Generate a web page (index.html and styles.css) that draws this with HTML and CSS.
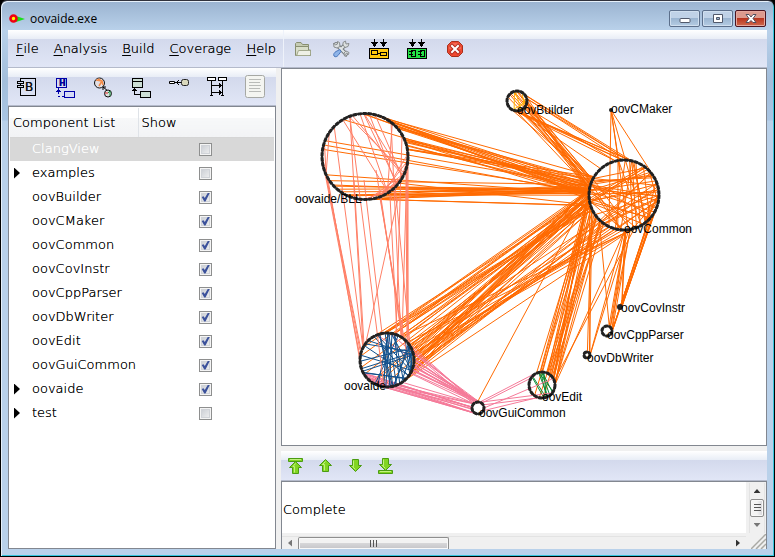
FILE: index.html
```html
<!DOCTYPE html>
<html lang="en">
<head>
<meta charset="utf-8">
<title>oovaide.exe</title>
<link rel="stylesheet" href="styles.css">
</head>
<body>
<div class="window">
  <header class="titlebar">
    <svg class="app-icon" width="16" height="10" viewBox="0 0 16 10" aria-hidden="true"><path d="M7 2l9 3-9 3z" fill="#1be01b"/><circle cx="4.500" cy="4.500" r="3" fill="#ff0" stroke="#f00013" stroke-width="2.600"/></svg>
    <h1 class="title">oovaide.exe</h1>
    <div class="caption-buttons">
      <button class="caption" aria-label="Minimize"><svg width="12" height="12" viewBox="0 0 12 12"><rect x="1" y="5.500" width="10" height="4" rx="1" fill="#fff" stroke="#51596b"/></svg></button>
      <button class="caption" aria-label="Maximize"><svg width="12" height="12" viewBox="0 0 12 12"><path d="M1.500 1.500h9v8h-9z" fill="#fff" stroke="#51596b"/><path d="M4.500 4.500h3v2h-3z" fill="#9ab4d0" stroke="#51596b"/></svg></button>
      <button class="caption close" aria-label="Close"><svg width="12" height="12" viewBox="0 0 12 12"><path d="M1 1.500h3l2 2.500 2-2.500h3l-3 4 3 4H8L6 7.500l-2 2H1l3-4z" fill="#fff" stroke="#51505f"/></svg></button>
    </div>
  </header>

  <div class="topbar">
    <nav class="menu">
      <button><u>F</u>ile</button><button><u>A</u>nalysis</button><button><u>B</u>uild</button><button><u>C</u>overage</button><button><u>H</u>elp</button>
    </nav>
    <div class="tools">
      <button aria-label="Open project"><svg width="18" height="16" viewBox="0 0 18 16"><path d="M1.500 13V2.500l1-1H7l1.500 2h6V7" fill="#c5cbb2" stroke="#888e70"/><path d="M1.500 14.500V5.500h13V9h2v5.500z" fill="#d9dec9" stroke="#888e70"/><path d="M4 14V9.500h12V14z" fill="#eef0e5"/><path d="M4.500 9.500h12v4l-1 1h-13z" fill="none" stroke="#a3a98d"/></svg></button>
      <button aria-label="Settings"><svg width="18" height="18" viewBox="0 0 18 18"><path d="M4 4l10 10" stroke="#74797c" stroke-width="4" stroke-linecap="round"/><path d="M13 5L8 10" stroke="#777d80" stroke-width="4"/><path d="M4 4l10 10M13 5L8 10" stroke="#e2e6e6" stroke-width="2" stroke-linecap="round"/><path d="M1.500 3l2 2 2-1V1.500l2 1 .5 4-3 1.500-3-1zM11 5V2.500L13.500 1l.5 3 3-.5-1 3-3 1zM12 13l2-2 3 1.500-.5 2-2-1.500-1 1.500 1 2-2-.5z" fill="#dce0e0" stroke="#8a8e90"/><path d="M2 16c-1-2 .5-3.500 2-4.500l4-2 1 2-3 4c-1 1-2.500 2-4 .5z" fill="#8eb4e8" stroke="#4c78bd"/></svg></button>
      <button aria-label="Build analysis"><svg width="20" height="20" viewBox="0 0 20 20" shape-rendering="crispEdges"><path d="M.5 9.500h19v10H.5z" fill="#ffc90e" stroke="#000"/><path d="M2.500 11.500h6v4h-6zM11.500 13.500h6v3h-6zM8 14.500h4" fill="none" stroke="#000"/><path d="M5.500 0v6M14.500 0v6" stroke="#000"/><path d="M2 3h7L5.500 8zM11 3h7l-3.500 5z"/></svg></button>
      <button aria-label="Build components"><svg width="20" height="20" viewBox="0 0 20 20" shape-rendering="crispEdges"><path d="M.5 9.500h19v10H.5z" fill="#22e345" stroke="#000"/><path d="M4.500 11.500h4v6h-4zM13.500 11.500h4v6h-4zM2 12.500h4M2 15.500h4M11 12.500h4M11 15.500h4" fill="none" stroke="#000"/><path d="M5.500 0v6M14.500 0v6" stroke="#000"/><path d="M2 3h7L5.500 8zM11 3h7l-3.500 5z"/></svg></button>
      <button aria-label="Stop"><svg width="18" height="18" viewBox="0 0 18 18"><path d="M5.500 1.500h7l4 4v7l-4 4h-7l-4-4v-7z" fill="#ef4932" stroke="#a7301c"/><path d="M6 3h6l3 3v3H3V6z" fill="#fa7b64" opacity=".6"/><path d="M6 6l6 6M12 6l-6 6" stroke="#b32a1d" stroke-width="4" stroke-linecap="square"/><path d="M6 6l6 6M12 6l-6 6" stroke="#fff" stroke-width="2" stroke-linecap="square"/></svg></button>
    </div>
  </div>

  <main class="workspace">
    <section class="side">
      <div class="view-tools">
        <button aria-label="Component diagram"><svg width="20" height="22" viewBox="0 0 20 22" shape-rendering="crispEdges"><path d="M3.500 2.500h15v17h-15z" fill="none" stroke="#000"/><path d="M.5 5.500h6v2h-6zM.5 9.500h6v2h-6z" fill="#d4daed" stroke="#000"/><text x="8" y="15" class="glyph">B</text></svg></button>
        <button aria-label="Zone diagram"><svg width="20" height="22" viewBox="0 0 20 22" shape-rendering="crispEdges"><g fill="none" stroke="#0000a8"><path d="M1.500 2.500h10v9h-10z"/><path d="M9.500 15.500h10v6h-10z" fill="#d5dbf5"/><path d="M3.500 12v6M1 15.500h5M2 14.500h3M3.500 20v1M4 20.500h1M7 20.500h2"/></g><text x="4" y="10" class="glyph small">H</text></svg></button>
        <button aria-label="Portion diagram"><svg width="20" height="22" viewBox="0 0 20 22"><circle cx="6.500" cy="7" r="5" fill="#e3dfe3" stroke="#111"/><path d="M3 4l6 1-3 5M5 3l4 2 1 4" fill="none" stroke="#f38b48" stroke-width="1.500"/><path d="M10 11l5 4M10 11v3M10 11h3" stroke="#000" fill="none"/><circle cx="15" cy="17.500" r="3.500" fill="#dadfdd" stroke="#111"/><path d="M12 17h3" stroke="#d22"/><path d="M15 17l2-2v5" stroke="#198d40" fill="none"/></svg></button>
        <button aria-label="Class diagram"><svg width="20" height="22" viewBox="0 0 20 22" shape-rendering="crispEdges"><g fill="#cbded5" stroke="#000"><path d="M1.500 2.500h10v9h-10zM1.500 5.500h10M9.500 15.500h10v6h-10z"/><path d="M3.500 12v6.500h6M1 14.500h5M2 13.500h3" fill="none"/></g></svg></button>
        <button aria-label="Operation diagram"><svg width="20" height="22" viewBox="0 0 20 22"><path d="M.5 5.500h5v2h-5z" fill="#fff" stroke="#000"/><path d="M6 6.500h7M10 4L7.500 6.500 10 9" fill="none" stroke="#000"/><rect x="12.500" y="3.500" width="7" height="6" rx="2" fill="#dad9bd" stroke="#222"/></svg></button>
        <button aria-label="Sequence diagram"><svg width="20" height="22" viewBox="0 0 20 22" shape-rendering="crispEdges"><path d="M.5 1.500h8v3h-8zM11.500 1.500h8v3h-8z" fill="#fff" stroke="#000"/><path d="M4.500 5v15M15.500 5v15M3 19.500h3M14 19.500h3M5 9.500h10M5 16.500h10M12.500 7v5M13.500 8v3M12.500 14v5M13.500 15v3" fill="none" stroke="#000"/></svg></button>
        <button aria-label="View source"><svg width="20" height="24" viewBox="0 0 20 24"><rect x=".5" y=".5" width="19" height="22" rx="2" fill="#f4f5f1" stroke="#a6a8a4"/><path d="M4 4.500h12M4 7.500h11M4 10.500h12M4 13.500h11M4 16.500h12" stroke="#b9bbb8"/></svg></button>
      </div>
      <div class="list-panel">
        <table class="components">
          <colgroup><col class="arrow-col"><col class="name-col"><col></colgroup>
          <thead><tr><th colspan="2" scope="col">Component List</th><th scope="col">Show</th></tr></thead>
          <tbody>
            <tr class="selected"><td></td><td><label for="c1">ClangView</label></td><td><input type="checkbox" id="c1"></td></tr>
            <tr><td><i class="expander"></i></td><td><label for="c2">examples</label></td><td><input type="checkbox" id="c2"></td></tr>
            <tr><td></td><td><label for="c3">oovBuilder</label></td><td><input type="checkbox" id="c3" checked></td></tr>
            <tr><td></td><td><label for="c4">oovCMaker</label></td><td><input type="checkbox" id="c4" checked></td></tr>
            <tr><td></td><td><label for="c5">oovCommon</label></td><td><input type="checkbox" id="c5" checked></td></tr>
            <tr><td></td><td><label for="c6">oovCovInstr</label></td><td><input type="checkbox" id="c6" checked></td></tr>
            <tr><td></td><td><label for="c7">oovCppParser</label></td><td><input type="checkbox" id="c7" checked></td></tr>
            <tr><td></td><td><label for="c8">oovDbWriter</label></td><td><input type="checkbox" id="c8" checked></td></tr>
            <tr><td></td><td><label for="c9">oovEdit</label></td><td><input type="checkbox" id="c9" checked></td></tr>
            <tr><td></td><td><label for="c10">oovGuiCommon</label></td><td><input type="checkbox" id="c10" checked></td></tr>
            <tr><td><i class="expander"></i></td><td><label for="c11">oovaide</label></td><td><input type="checkbox" id="c11" checked></td></tr>
            <tr><td><i class="expander"></i></td><td><label for="c12">test</label></td><td><input type="checkbox" id="c12"></td></tr>
          </tbody>
        </table>
      </div>
    </section>

    <section class="content">
      <div class="diagram">
        <svg id="graph" viewBox="282 69 484 376" preserveAspectRatio="xMinYMin meet" role="img" aria-label="Component dependency graph">
          <g id="edges"></g>
          <g id="nodes"></g>
          <g id="labels"></g>
        </svg>
      </div>
      <div class="nav-tools">
        <button aria-label="Top"><svg width="16" height="16" viewBox="0 0 16 16"><path class="green" d="M.5.500h14v3H.5zM7.500 3.500l6 6h-3v6h-6v-6h-3z"/><path class="shine" d="M2 1.500h11M7.500 5.500L5 8.500h1.500v6"/></svg></button>
        <button aria-label="Up"><svg width="16" height="16" viewBox="0 0 16 16"><path class="green" d="M7.500 1.500l6 6h-3v6h-6v-6h-3z"/><path class="shine" d="M7.500 3.500l-3 3h2v6"/></svg></button>
        <button aria-label="Down"><svg width="16" height="16" viewBox="0 0 16 16"><path class="green" d="M4.500 1.500h6v6h3l-6 6-6-6h3z"/><path class="shine" d="M5.500 2.500v6h-1l3 3"/></svg></button>
        <button aria-label="Bottom"><svg width="16" height="16" viewBox="0 0 16 16"><path class="green" d="M4.500.500h6v6h3l-6 6-6-6h3zM.5 12.500h14v3H.5z"/><path class="shine" d="M5.500 1.500v6h-1l3 3M2 13.500h11"/></svg></button>
      </div>
      <div class="output">
        <div class="message">Complete</div>
        <div class="vscroll">
          <button aria-label="Scroll up"><i class="tri up"></i></button>
          <div class="thumb"></div>
          <button aria-label="Scroll down"><i class="tri down"></i></button>
        </div>
        <div class="hscroll">
          <button aria-label="Scroll left"><i class="tri left"></i></button>
          <div class="track"><div class="thumb"></div></div>
          <button aria-label="Scroll right"><i class="tri right"></i></button>
        </div>
        <svg class="grip" width="15" height="15" viewBox="0 0 15 15" aria-hidden="true"><path d="M0 15L15 0M5 15L15 5M10 15l5-5" stroke="#a9a9a4" stroke-width="1.500"/></svg>
      </div>
    </section>
  </main>
</div>
<script src="graph.js"></script>
</body>
</html>
```
FILE: styles.css
```css
* { box-sizing: border-box; }

body {
  margin: 0;
  height: 100vh;
  background: #000;
  font: 200 13px/18px "DejaVu Sans", "DejaVu Sans Light", Verdana, sans-serif;
  color: #000;
  text-shadow: 0 0 currentColor;
  overflow: hidden;
}

button {
  display: flex;
  align-items: center;
  justify-content: center;
  margin: 0;
  padding: 0;
  border: 0;
  background: none;
  font: inherit;
  color: inherit;
  text-shadow: inherit;
}

.window {
  display: flex;
  flex-direction: column;
  height: 100vh;
  padding: 0 7px 7px 6px;
  border: solid #000;
  border-width: 1px;
  border-top-color: #30323c;
  border-radius: 7px 7px 0 0;
  background: linear-gradient(#9ab3d0, #b9d1ea 29px, #a3bedb 80px, #a9c5e3 119px, #b9d1ea 120px);
  box-shadow: inset 1px 1px #e6f0fa, inset -1px -1px #35c5dc;
}

.titlebar {
  display: flex;
  align-items: center;
  flex: none;
  height: 29px;
  padding: 6px 1px 0 2px;
}

.app-icon { margin-right: 5px; }

.title {
  flex: 1;
  margin: 0;
  font: 12px/18px "Open Sans", "Noto Sans", sans-serif;
  color: #000;
  text-shadow: none;
}

.caption-buttons { display: flex; gap: 2px; }

.caption {
  width: 31px;
  height: 17px;
  border: 1px solid #5c6f8b;
  border-radius: 2px;
  background: linear-gradient(#c0d2e7 50%, #9bb5d1 50%, #b5cce3);
  box-shadow: inset 0 0 0 1px #d0dfef;
}

.close {
  border-color: #4a1420;
  background: linear-gradient(#dc9a8e 45%, #b9351f 50%, #cf6a4e);
  box-shadow: inset 0 0 0 1px #e5a79d;
}

.topbar, .view-tools, .nav-tools {
  display: flex;
  flex: none;
  border-bottom: 1px solid #b4bacb;
  background: linear-gradient(#fff, #e8edf6 9px, #d3d9ec 9px, #e1e6f6);
}

.topbar { height: 38px; margin-left: 1px; }

.menu {
  display: flex;
  flex: none;
  width: 276px;
  gap: 15px;
  padding-left: 8px;
  border-right: 1px solid #eef2fa;
  overflow: hidden;
}

.menu u { text-underline-offset: 2px; }

.tools { display: flex; }

.tools button, .view-tools button { width: 38px; }

.workspace {
  display: flex;
  flex: 1;
  min-height: 0;
  margin-left: 1px;
  background: #f0f0f0;
}

.side {
  display: flex;
  flex: none;
  flex-direction: column;
  width: 268px;
}

.view-tools { height: 38px; }

.glyph {
  font: 12px "DejaVu Sans", sans-serif;
  fill: #111;
}

.glyph.small { font-size: 8px; font-weight: bold; fill: #0000a8; }

.list-panel {
  flex: 1;
  padding: 1px;
  border: 1px solid #828790;
  background: #fff;
}

.components {
  width: 100%;
  border-collapse: collapse;
  table-layout: fixed;
}

.arrow-col { width: 22px; }
.name-col { width: 106px; }

.components th {
  height: 29px;
  padding: 2px 3px 0;
  border-bottom: 1px solid #d5d5d5;
  background: linear-gradient(#fff 35%, #f7f8f9 35%, #f2f3f5);
  font-weight: inherit;
  text-align: left;
}

.components th + th { border-left: 1px solid #dfe3e8; }

.components td { height: 24px; padding: 0; white-space: nowrap; }
.components td:last-child { padding-left: 61px; }

.components td:last-child, .components th { vertical-align: middle; }

.selected { background: #d8d8d8; color: #fff; }

.expander {
  display: block;
  width: 6px;
  height: 11px;
  margin-left: 4px;
  background: #000;
  clip-path: polygon(0 0, 100% 50%, 0 100%);
}

input[type="checkbox"] {
  appearance: none;
  display: block;
  width: 13px;
  height: 13px;
  margin: 0;
  border: 1px solid #8e8f8f;
  background: linear-gradient(135deg, #c5c9d0, #f4f4f4);
  box-shadow: inset 0 0 0 1px #f4f4f4, inset 0 0 0 2px #d0d3d8;
}

input[type="checkbox"]:checked::after {
  content: "";
  display: block;
  width: 9px;
  height: 9px;
  margin: 1px;
  background: #3b519b;
  clip-path: polygon(8% 50%, 28% 42%, 42% 62%, 78% 0, 100% 0, 50% 100%, 36% 100%);
}

.content {
  display: flex;
  flex: 1;
  flex-direction: column;
  min-width: 0;
  margin-left: 5px;
}

.diagram {
  flex: 1;
  min-height: 0;
  border: 1px solid #828790;
  background: #fff;
}

.diagram svg { display: block; width: 100%; height: 100%; }

#edges path { fill: none; stroke-width: 1; }
#nodes { fill: none; stroke: #222; stroke-width: 2; }
#nodes .ring { stroke-width: 3; stroke-dasharray: 4 1; }
#nodes .dot { fill: #222; stroke: none; }
#labels {
  font: 12px "Liberation Sans", Arial, sans-serif;
  fill: #000;
  text-shadow: none;
}

.nav-tools {
  height: 30px;
  margin-top: 5px;
}

.nav-tools button { width: 30px; }

.green { fill: #82d522; stroke: #4b9c12; }
.shine { fill: none; stroke: #c1f27f; }

.output {
  display: grid;
  flex: none;
  grid-template: 51px 16px / 1fr 20px;
  border: solid #828790;
  border-width: 1px 1px 0;
  background: #f0f0f0;
}

.message {
  display: flex;
  align-items: center;
  padding: 4px 1px 0;
  background: #fff;
}

.vscroll {
  display: flex;
  flex-direction: column;
  margin: 1px 1px 0 3px;
  border: solid #e3e3e3;
  border-width: 0 1px;
}

.vscroll button { flex: 1; }

.thumb {
  border: 1px solid #8e8e8e;
  border-radius: 2px;
  box-shadow: inset 0 0 0 1px #f8f8f8;
}

.vscroll .thumb {
  height: 18px;
  background:
    repeating-linear-gradient(#555 0 1px, transparent 1px 3px) center / 7px 8px no-repeat,
    linear-gradient(90deg, #f4f4f4 50%, #d4d4d8);
}

.hscroll {
  display: flex;
  margin-top: 3px;
  border-top: 1px solid #e3e3e3;
}

.hscroll button { width: 16px; }

.track { flex: 1; }

.hscroll .thumb {
  width: 35%;
  height: 12px;
  border-bottom: 0;
  border-radius: 2px 2px 0 0;
  background:
    repeating-linear-gradient(90deg, #555 0 1px, transparent 1px 3px) center / 8px 7px no-repeat,
    linear-gradient(#f2f2f2 45%, #d6d6d8 50%, #c4c4c8);
}

.tri { width: 7px; height: 4px; background: #333; }
.tri.up { clip-path: polygon(50% 0, 100% 100%, 0 100%); }
.tri.down { clip-path: polygon(0 0, 100% 0, 50% 100%); background: #777; }
.tri.left, .tri.right { width: 4px; height: 7px; }
.tri.left { clip-path: polygon(100% 0, 100% 100%, 0 50%); background: #777; }
.tri.right { clip-path: polygon(0 0, 100% 50%, 0 100%); }

.grip { align-self: end; justify-self: end; }
```
FILE: graph.js
```js
const NODES = {
  bll: { x: 365, y: 156.5, r: 43, label: "oovaide/BLL", lx: 295, ly: 203 },
  builder: { x: 517, y: 101, r: 10, label: "oovBuilder", lx: 517, ly: 114 },
  cmaker: { x: 611, y: 110, r: 1, label: "oovCMaker", lx: 611, ly: 113 },
  common: { x: 624, y: 195, r: 35, label: "oovCommon", lx: 624, ly: 233 },
  cov: { x: 620, y: 307, r: 2, label: "oovCovInstr", lx: 621, ly: 312 },
  cpp: { x: 607, y: 331, r: 5, label: "oovCppParser", lx: 607, ly: 339 },
  db: { x: 587, y: 355, r: 3, label: "oovDbWriter", lx: 587, ly: 362 },
  edit: { x: 542, y: 385, r: 13, label: "oovEdit", lx: 542, ly: 401 },
  gui: { x: 478, y: 408, r: 6, label: "oovGuiCommon", lx: 479, ly: 417 },
  ide: { x: 387, y: 360, r: 27, label: "oovaide", lx: 344, ly: 390 }
};

const ORANGE = "#ff6a00", SALMON = "#ff7f66", PINK = "#f57a99";
const BLUE = "#10508c", GREEN = "#0c8a35", GOLD = "#ffb400";

// Bundles: colour, node, angle range, node, angle range, count.
// Angles are in degrees, clockwise from the right.
const BUNDLES = [
  [ORANGE, "bll", -62, -5, "common", 172, 215, 18],
  [ORANGE, "bll", -125, -50, "common", 175, 200, 7],
  [ORANGE, "bll", 175, 215, "common", 180, 195, 3],
  [ORANGE, "bll", 25, 85, "common", 178, 200, 10],
  [ORANGE, "bll", 110, 155, "common", 178, 200, 9],
  [ORANGE, "bll", 30, 90, "common", 140, 165, 3],
  [ORANGE, "builder", 0, 360, "common", 185, 208, 18],
  [ORANGE, "builder", -60, 130, "common", -105, -75, 10],
  [ORANGE, "builder", 60, 90, "common", 220, 235, 1],
  [ORANGE, "ide", -105, 45, "common", 155, 195, 32],
  [ORANGE, "ide", 90, 235, "common", 165, 190, 9],
  [ORANGE, "ide", -60, 50, "common", 70, 140, 18],
  [ORANGE, "edit", -140, -20, "common", 165, 195, 10],
  [ORANGE, "edit", -110, 10, "common", 120, 170, 9],
  [ORANGE, "edit", -20, 40, "common", 70, 90, 2],
  [ORANGE, "edit", 70, 150, "common", 140, 160, 3],
  [ORANGE, "db", -100, 0, "common", 155, 175, 3],
  [ORANGE, "db", -20, 20, "common", 80, 95, 2],
  [ORANGE, "cpp", -20, 40, "common", 30, 50, 5],
  [ORANGE, "cpp", -70, 20, "common", 75, 95, 5],
  [ORANGE, "cpp", -90, -60, "common", 135, 140, 1],
  [ORANGE, "cov", -120, 0, "common", 15, 45, 5],
  [ORANGE, "cov", -120, 0, "common", 75, 90, 2],
  [ORANGE, "common", 165, 210, "common", -60, 100, 28],
  [ORANGE, "common", -100, -70, "common", 50, 110, 9],
  [ORANGE, "common", -60, 20, "common", 10, 150, 18],
  [SALMON, "bll", -20, 60, "bll", 10, 110, 12],
  [SALMON, "bll", -125, -40, "bll", 20, 80, 8],
  [SALMON, "bll", 150, 200, "bll", 155, 225, 5],
  [PINK, "ide", -30, 30, "gui", -140, -20, 13],
  [PINK, "ide", 70, 165, "gui", 100, 230, 13],
  [PINK, "ide", -120, 60, "gui", -160, -60, 7],
  [BLUE, "ide", -110, -60, "ide", 60, 120, 9],
  [BLUE, "ide", 150, 250, "ide", -40, 60, 11],
  [BLUE, "ide", -95, -20, "ide", 20, 100, 11],
  [GREEN, "edit", -110, -80, "edit", 10, 70, 6],
  [GREEN, "edit", -150, -130, "edit", 70, 90, 2],
  [GOLD, "builder", -120, 0, "builder", 40, 180, 5]
];

// Single links: colour and end points.
const LINKS = [
  [ORANGE, 611, 110, 609, 225], [ORANGE, 611, 110, 628, 228],
  [ORANGE, 611, 110, 634, 190], [ORANGE, 611, 110, 651, 172],
  [ORANGE, 611, 110, 620, 170], [ORANGE, 478, 401, 591, 190],
  [SALMON, 324, 168, 360, 357], [SALMON, 323, 160, 361, 350],
  [SALMON, 328, 180, 361, 367], [SALMON, 326, 175, 360, 350],
  [SALMON, 334, 125, 363, 348], [SALMON, 350, 117, 363, 346],
  [SALMON, 354, 180, 364, 345], [SALMON, 350, 118, 384, 387],
  [SALMON, 364, 180, 382, 333], [SALMON, 376, 170, 403, 340],
  [SALMON, 380, 198, 406, 350], [SALMON, 381, 198, 402, 338],
  [SALMON, 402, 136, 396, 334], [SALMON, 398, 198, 366, 342],
  [SALMON, 390, 196, 397, 336], [SALMON, 391, 122, 401, 338],
  [SALMON, 395, 185, 410, 345], [SALMON, 407, 165, 402, 338],
  [SALMON, 406, 170, 407, 342], [SALMON, 407, 150, 408, 343],
  [SALMON, 408, 150, 408, 343], [SALMON, 343, 120, 393, 200],
  [PINK, 534, 374, 480, 402], [PINK, 535, 376, 480, 404],
  [PINK, 552, 393, 482, 402], [PINK, 545, 397, 482, 405],
  [PINK, 552, 379, 484, 408], [PINK, 540, 397, 482, 411]
];

const svg = (parent, tag, attrs) => {
  const el = document.createElementNS("http://www.w3.org/2000/svg", tag);
  for (const key in attrs) el.setAttribute(key, attrs[key]);
  return document.getElementById(parent).appendChild(el);
};

let seed = 7;
const random = () => (seed = (seed * 16807) % 2147483647) / 2147483647;

const point = (name, from, to) => {
  const node = NODES[name];
  const angle = (from + random() * (to - from)) * Math.PI / 180;
  return (node.x + node.r * Math.cos(angle)).toFixed(1) + " " +
    (node.y + node.r * Math.sin(angle)).toFixed(1);
};

const line = (stroke, d) => svg("edges", "path", { stroke, d });

for (const [color, a, a0, a1, b, b0, b1, count] of BUNDLES) {
  for (let i = 0; i < count; i++) {
    line(color, "M" + point(a, a0, a1) + "L" + point(b, b0, b1));
  }
}
for (const [color, x1, y1, x2, y2] of LINKS) {
  line(color, `M${x1} ${y1}L${x2} ${y2}`);
}
for (const n of Object.values(NODES)) {
  const attrs = { cx: n.x, cy: n.y, r: n.r };
  if (n.r < 3) {
    svg("nodes", "circle", { ...attrs, class: "dot", r: n.r + 1 });
  } else {
    svg("nodes", "circle", attrs);
    svg("nodes", "circle", { ...attrs, class: "ring" });
  }
  svg("labels", "text", { x: n.lx, y: n.ly }).textContent = n.label;
}
```
